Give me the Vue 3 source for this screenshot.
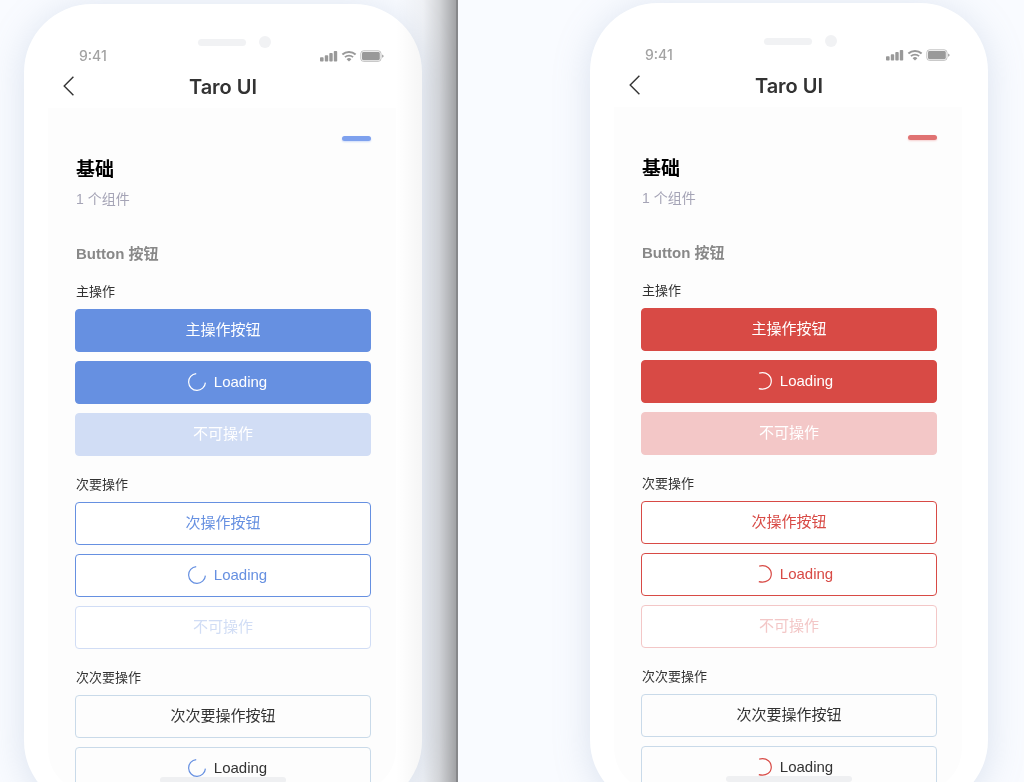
<script setup>
const themes = [
  { name: 'blue', arc: 'M17.4 9.6A8.4 8.4 0 1 1 8.2 .6' },
  { name: 'red', arc: 'M5.2 1.1C13.5-.8 17.4 4.6 17.3 9.2C17.1 14.4 12.6 18.6 4.8 16.7' }
]

const groups = [
  {
    title: '主操作',
    kind: 'primary',
    buttons: [
      { text: '主操作按钮' },
      { text: 'Loading', loading: true },
      { text: '不可操作', disabled: true }
    ]
  },
  {
    title: '次要操作',
    kind: 'secondary',
    buttons: [
      { text: '次操作按钮' },
      { text: 'Loading', loading: true },
      { text: '不可操作', disabled: true }
    ]
  },
  {
    title: '次次要操作',
    kind: 'plain',
    buttons: [{ text: '次次要操作按钮' }, { text: 'Loading', loading: true }]
  }
]
</script>

<template>
  <main class="page">
    <section v-for="theme in themes" :key="theme.name" class="pane" :class="theme.name">
      <article class="phone">
        <div class="speaker">
          <span class="slot"></span>
          <span class="camera"></span>
        </div>
        <div class="status">
          <span class="time">9:41</span>
          <svg class="status-icons" width="64" height="12" viewBox="0 0 64 12" aria-hidden="true">
            <g fill="#999">
              <rect x="0" y="7.3" width="3.6" height="4.2" rx=".8" />
              <rect x="4.8" y="5.2" width="3.4" height="6.3" rx=".8" />
              <rect x="9.3" y="3.1" width="3.4" height="8.4" rx=".8" />
              <rect x="13.8" y="1" width="3.4" height="10.5" rx=".8" />
              <path d="M29 11.5l-2.4-2.3a3.5 3.5 0 0 1 4.8 0z" />
              <rect x="42" y="2" width="17.8" height="8.2" rx="1.4" />
              <path d="M62.2 4.4q1.4.6 1.4 1.7t-1.4 1.7z" />
            </g>
            <g fill="none" stroke="#999">
              <path d="M22.4 4.6a9.6 9.6 0 0 1 13.2 0" stroke-width="2" />
              <path d="M24.9 7.2a6 6 0 0 1 8.2 0" stroke-width="1.7" />
              <rect x="40.8" y=".8" width="20.2" height="10.6" rx="2.8" stroke-opacity=".6" />
            </g>
          </svg>
        </div>
        <header class="nav">
          <button class="back" type="button" aria-label="返回">
            <svg width="12" height="20" viewBox="0 0 12 20" aria-hidden="true">
              <path d="M10.4 .8L1.2 10l9.2 9.2" fill="none" stroke="#333" stroke-width="1.4" />
            </svg>
          </button>
          <h1>Taro UI</h1>
        </header>
        <div class="screen">
          <div class="accent"></div>
          <h2>基础</h2>
          <p class="count">1 个组件</p>
          <h3>Button 按钮</h3>
          <div v-for="group in groups" :key="group.title" class="group">
            <h4>{{ group.title }}</h4>
            <button
              v-for="item in group.buttons"
              :key="item.text"
              type="button"
              class="btn"
              :class="group.kind"
              :disabled="item.disabled"
            >
              <svg v-if="item.loading" class="spinner" width="18" height="18" viewBox="0 0 18 18" aria-hidden="true">
                <path :d="theme.arc" fill="none" stroke-width="1.2" />
              </svg>
              <span>{{ item.text }}</span>
            </button>
          </div>
        </div>
        <span class="home"></span>
      </article>
    </section>
  </main>
</template>

<style>
body {
  background: #f9fbff;
}
</style>

<style scoped>
.page {
  display: grid;
  grid-template-columns: minmax(0, 458fr) minmax(0, 566fr);
  height: 100vh;
  overflow: hidden;
  font-family: "Liberation Sans", "Noto Sans CJK SC", sans-serif;
  color: #333;
}

.pane {
  position: relative;
  display: flex;
  justify-content: flex-end;
  align-items: flex-start;
  padding: 3px 36px 0 24px;
  overflow: hidden;
  background: #f9fbff;
}

.blue {
  --main: #6690e1;
  --faded: #d1ddf5;
  --accent: #7ea1ee;
  --accent-shadow: #cfdcf8;
  padding-top: 4px;
}

.red {
  --main: #d84a45;
  --faded: #f3c7c7;
  --accent: #e07272;
  --accent-shadow: #f6d0d0;
}

.blue::after {
  content: "";
  position: absolute;
  top: 0;
  right: 0;
  bottom: 0;
  width: 62px;
  border-right: 2px solid #87888b;
  box-sizing: border-box;
  background: linear-gradient(to right, rgba(0, 0, 0, 0), rgba(0, 0, 0, 0.04) 45%, rgba(0, 0, 0, 0.15) 72%, rgba(0, 0, 0, 0.35));
  pointer-events: none;
}

.phone {
  position: relative;
  width: 100%;
  max-width: 398px;
  padding: 32px 0 16px;
  box-sizing: border-box;
  border-radius: 68px;
  background: #fff;
  box-shadow: 0 4px 36px rgba(130, 155, 190, 0.26);
}

.speaker {
  display: flex;
  align-items: center;
  justify-content: center;
  gap: 13px;
  height: 12px;
  padding-left: 22px;
}

.slot {
  width: 48px;
  height: 7px;
  border-radius: 4px;
  background: #f1f2f4;
}

.camera {
  width: 12px;
  height: 12px;
  border-radius: 50%;
  background: #f1f2f4;
}

.status {
  display: flex;
  align-items: center;
  justify-content: space-between;
  height: 16px;
  padding: 0 38px 0 55px;
}

.time {
  font: 500 14px/16px Inter, sans-serif;
  color: #a3a3a3;
}

.nav {
  display: grid;
  grid-template-columns: 40px 1fr 40px;
  align-items: center;
  height: 44px;
  padding: 0 39px;
}

.back {
  display: flex;
  padding: 0;
  border: 0;
  background: none;
}

h1,
h2,
h3,
h4,
p {
  margin: 0;
}

h1 {
  padding-top: 1px;
  font: 600 20px/24px Inter, sans-serif;
  text-align: center;
}

.screen {
  margin: 0 26px 0 24px;
  padding: 28px 25px 3px 27px;
  border-radius: 0 0 44px 44px;
  background: #fdfdfd;
}

.accent {
  width: 29px;
  height: 5px;
  margin-left: auto;
  border-radius: 3px;
  background: var(--accent);
  box-shadow: 0 1px 2px var(--accent-shadow);
}

h2,
h3,
h4,
.count {
  padding-left: 1px;
}

h2 {
  margin-top: 15px;
  font-size: 19px;
  line-height: 28px;
  color: #000;
}

.count {
  margin-top: 5px;
  font-size: 14px;
  line-height: 20px;
  color: #a5a4b6;
}

h3 {
  margin-top: 33px;
  font-size: 15px;
  line-height: 24px;
  color: #888;
}

.group {
  display: flex;
  flex-direction: column;
  gap: 9px;
  margin-top: 20px;
}

h3 + .group {
  margin-top: 17px;
}

h4 {
  margin-bottom: -1px;
  font-size: 13px;
  font-weight: 400;
  line-height: 18px;
}

.btn {
  display: flex;
  align-items: center;
  justify-content: center;
  gap: 8px;
  height: 43px;
  padding: 0 0 1px;
  border: 1px solid var(--main);
  border-radius: 4px;
  font-family: inherit;
  font-size: 15px;
  line-height: 22px;
  color: var(--main);
  background: #fff;
}

.primary {
  color: #fff;
  background: var(--main);
}

.plain {
  border-color: #c9dae9;
  color: #333;
  background: #fdfdfd;
}

.secondary:disabled {
  border-color: var(--faded);
  color: var(--faded);
}

.primary:disabled {
  border-color: var(--faded);
  background: var(--faded);
}

.spinner {
  margin-left: 9px;
  stroke: var(--main);
}

.primary .spinner {
  stroke: #fff;
}

.home {
  position: absolute;
  left: 50%;
  bottom: 26px;
  width: 126px;
  height: 6px;
  margin-left: -63px;
  border-radius: 3px;
  background: #f1f2f4;
  mix-blend-mode: multiply;
}
</style>
